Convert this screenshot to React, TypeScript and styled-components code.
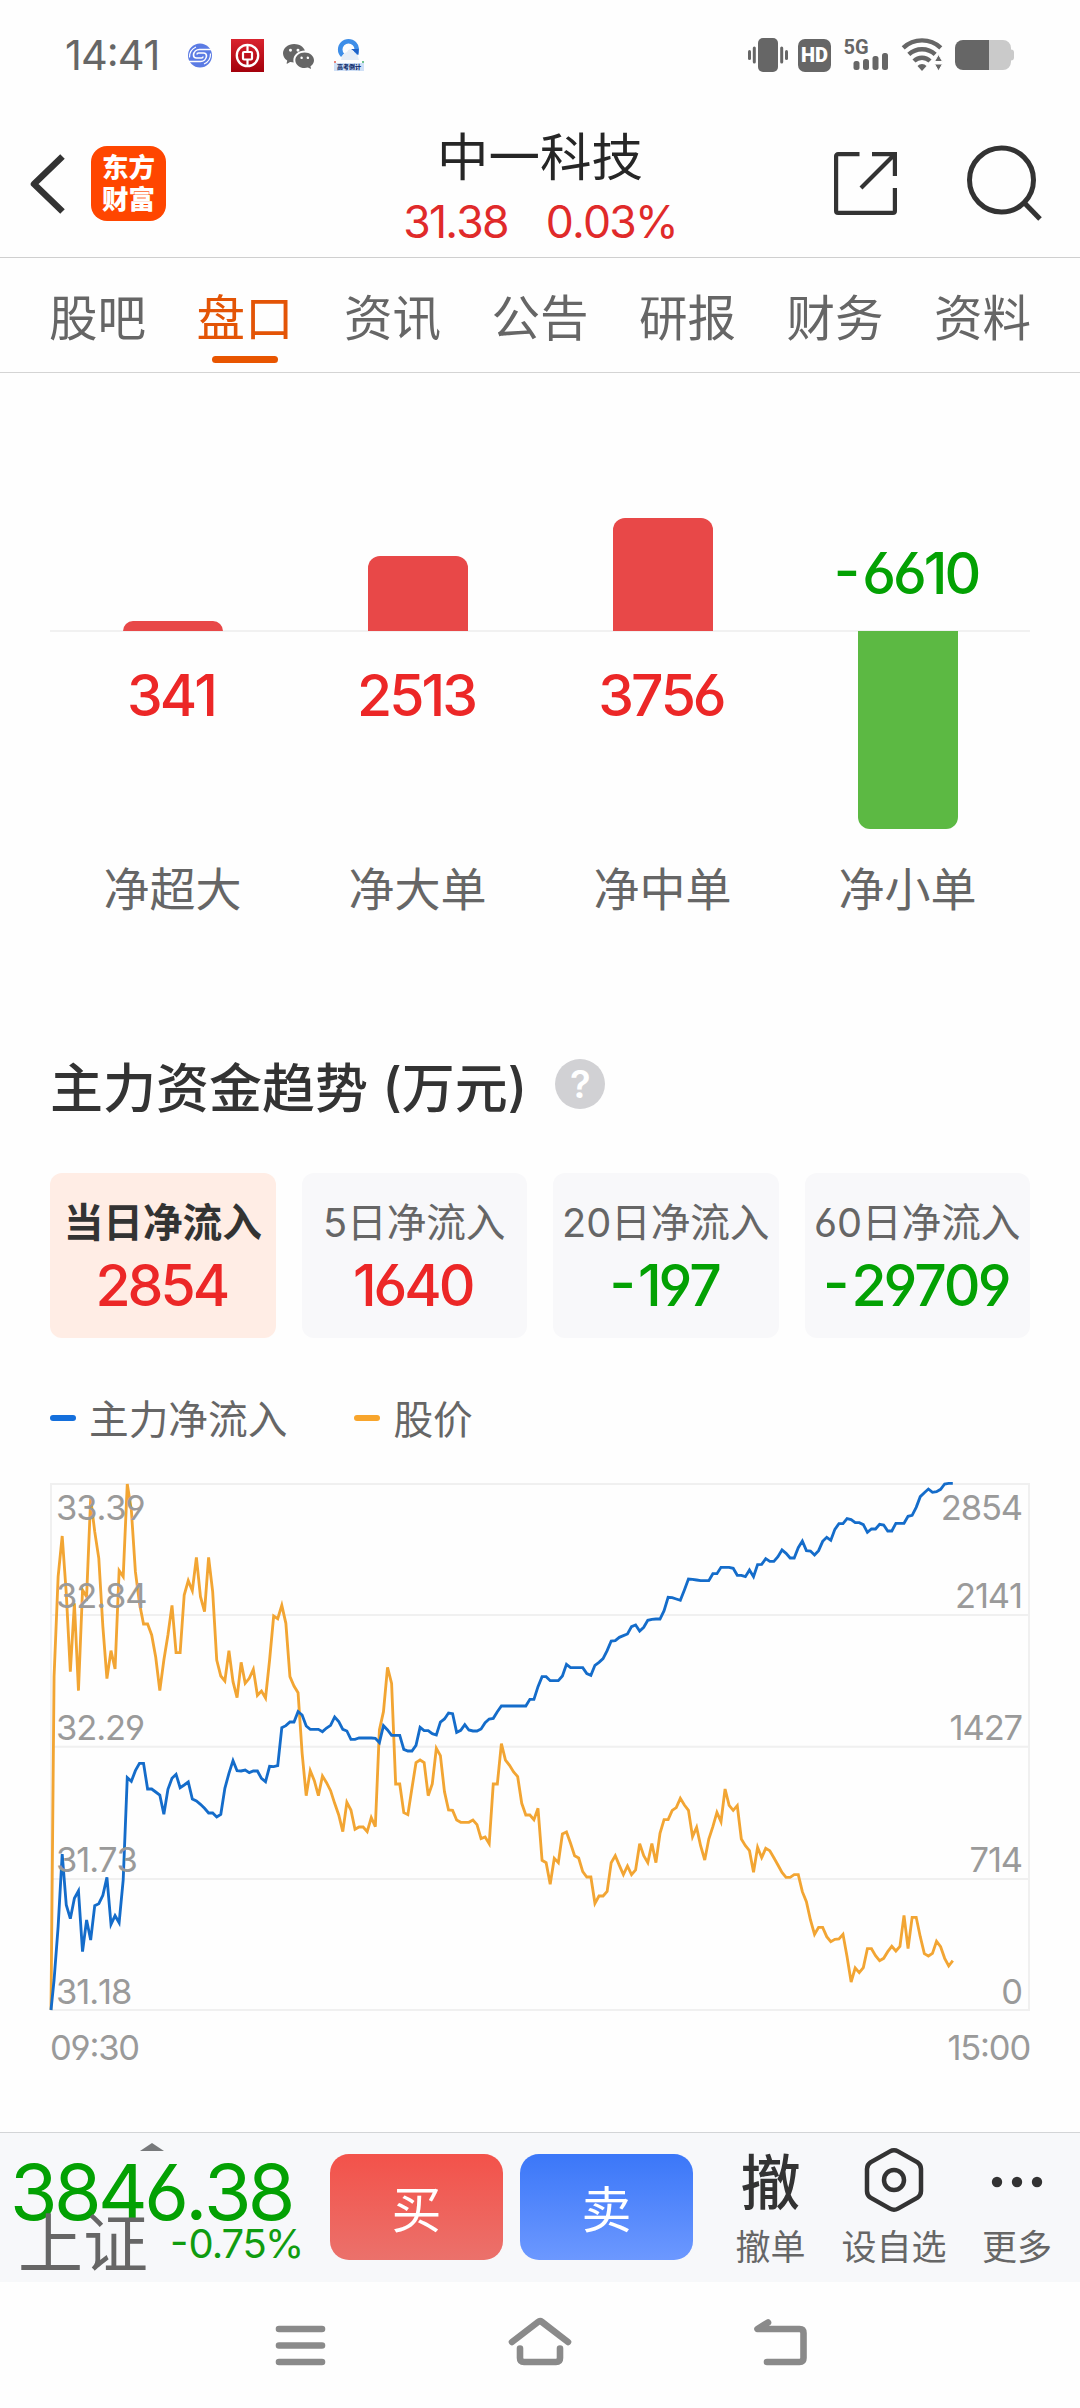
import React from "react";
import styled, { createGlobalStyle } from "styled-components";
import { BsWechat } from "react-icons/bs";

const RED = "#ec2727";
const GREEN = "#03a103";
const GREY = "#666666";
const INK = "#333333";

const GlobalStyle = createGlobalStyle`
  * { box-sizing: border-box; }
  body {
    margin: 0;
    background: #fefefe;
    font-family: Inter, "Noto Sans CJK SC", sans-serif;
    font-feature-settings: "cv03", "cv04", "case";
    font-kerning: none;
    color: ${INK};
  }
  svg { display: block; flex: none; overflow: visible; }
`;

const Screen = styled.div`
  width: 1080px;
  height: 2408px;
  display: flex;
  flex-direction: column;
  overflow: hidden;
`;

/* ---------- status bar ---------- */

const StatusBar = styled.div`
  height: 110px;
  padding: 0 66px 0 65px;
  display: flex;
  align-items: center;
  justify-content: space-between;
`;

const StatusGroup = styled.div`
  display: flex;
  align-items: center;
  gap: 13px;
`;

const Clock = styled.span`
  width: 107px;
  font-size: 41.5px;
  line-height: 50px;
  letter-spacing: -1px;
  color: ${GREY};
`;

const NotificationIcons = styled.div`
  display: flex;
  align-items: center;
  gap: 19px;
  padding-left: 3px;
`;

const HdBadge = styled.span`
  width: 33px;
  height: 33px;
  margin-left: -3px;
  border-radius: 7px;
  background: ${GREY};
  color: #fff;
  font-family: Roboto, sans-serif;
  font-size: 20px;
  font-weight: 900;
  line-height: 33px;
  text-align: center;
`;

/* ---------- header ---------- */

const Header = styled.header`
  height: 148px;
  border-bottom: 1px solid #cfcfcf;
  padding: 0 30px;
  display: grid;
  grid-template-columns: 1fr auto 1fr;
`;

const HeaderSide = styled.div<{ $end?: boolean; $gap: number }>`
  display: flex;
  align-items: center;
  justify-content: ${(p) => (p.$end ? "flex-end" : "flex-start")};
  padding-right: ${(p) => (p.$end ? 7 : 0)}px;
  gap: ${(p) => p.$gap}px;
`;

const AppLogo = styled.div`
  width: 75px;
  height: 75px;
  border-radius: 16px;
  background: #ff4600;
  color: #fff;
  font-size: 26.5px;
  font-weight: 900;
  line-height: 32px;
  padding-top: 5px;
  text-align: center;
`;

const Quote = styled.div`
  display: flex;
  flex-direction: column;
  align-items: center;
  padding-top: 17px;
`;

const StockName = styled.h1`
  margin: 0 0 10px;
  font-size: 51.5px;
  font-weight: 400;
  line-height: 60px;
  color: #262626;
`;

const StockPrice = styled.div`
  display: flex;
  gap: 38px;
  font-size: 44.5px;
  line-height: 50px;
  letter-spacing: -1.8px;
  color: #e02a2a;
`;

/* ---------- tabs ---------- */

const Tabs = styled.nav`
  height: 115px;
  border-bottom: 1px solid #d4d4d4;
  padding: 0 49px;
  display: flex;
  justify-content: space-between;
`;

const Tab = styled.div<{ $active?: boolean }>`
  display: flex;
  flex-direction: column;
  align-items: center;
  padding-top: 31px;
  font-size: 48.5px;
  line-height: 60px;
  color: ${(p) => (p.$active ? "#e35406" : GREY)};

  &::after {
    content: "";
    width: 66px;
    height: 7px;
    margin-top: 7px;
    border-radius: 4px;
    background: ${(p) => (p.$active ? "#e85500" : "transparent")};
  }
`;

/* ---------- signed amounts ---------- */

const AmountText = styled.div<{ $up: boolean }>`
  padding-right: 3px;
  font-size: 57px;
  font-weight: 500;
  line-height: 60px;
  letter-spacing: -3px;
  color: ${(p) => (p.$up ? RED : GREEN)};
`;

const Sign = styled.span<{ $space: number }>`
  letter-spacing: ${(p) => p.$space}px;
`;

const Amount = ({ value }: { value: number }) => (
  <AmountText $up={value > 0}>
    {value < 0 && <Sign $space={2}>-</Sign>}
    {Math.abs(value)}
  </AmountText>
);

/* ---------- order size bars ---------- */

const Bars = styled.section`
  margin: 0 50px;
  display: grid;
  grid-template-columns: repeat(4, 1fr);
  grid-template-rows: 258px 228px 61px;
  grid-auto-flow: column;
  justify-items: center;
  background: linear-gradient(#f1f1f1, #f1f1f1) 0 257px / 100% 2px no-repeat;
`;

const BarHalf = styled.div<{ $upper?: boolean; $text: boolean }>`
  display: flex;
  flex-direction: column;
  align-items: center;
  justify-content: ${(p) => (p.$upper ? "flex-end" : "flex-start")};
  padding: ${(p) => (!p.$text ? "0" : p.$upper ? "0 0 27px" : "35px 0 0")};
`;

const Bar = styled.div<{ $up: boolean }>`
  width: 100px;
  border-radius: ${(p) => (p.$up ? "12px 12px 0 0" : "0 0 12px 12px")};
  background: ${(p) => (p.$up ? "#e84848" : "#5cb943")};
`;

const BarLabel = styled.div`
  font-size: 46px;
  line-height: 60px;
  color: ${GREY};
`;

/* ---------- trend ---------- */

const TrendHead = styled.div`
  margin: 134px 50px 0;
  height: 71px;
  display: flex;
  gap: 28px;
`;

const TrendTitle = styled.h2`
  margin: 0;
  font-size: 53px;
  font-weight: 500;
  line-height: 70px;
`;

const Help = styled.span`
  width: 50px;
  height: 50px;
  margin-top: 5px;
  border-radius: 50%;
  background: #d1d1d4;
  color: #fff;
  font-size: 38px;
  font-weight: 600;
  line-height: 51px;
  text-align: center;
`;

const Periods = styled.div`
  margin: 48px 50px 0;
  display: grid;
  grid-template-columns: repeat(4, 1fr);
  gap: 26px;
`;

const Period = styled.div<{ $active?: boolean }>`
  height: 165px;
  border-radius: 12px;
  padding-top: 25px;
  display: flex;
  flex-direction: column;
  align-items: center;
  gap: 8px;
  white-space: nowrap;
  background: ${(p) => (p.$active ? "#ffede5" : "#f8f8fa")};
  color: ${(p) => (p.$active ? INK : GREY)};
  font-weight: ${(p) => (p.$active ? 700 : 400)};
`;

const PeriodName = styled.div`
  font-size: 39.7px;
  line-height: 50px;
  letter-spacing: -0.1px;
`;

const Legend = styled.div`
  margin: 57px 50px 0;
  display: flex;
  gap: 67px;
`;

const LegendItem = styled.div<{ $color: string }>`
  display: flex;
  align-items: center;
  gap: 13px;
  font-size: 39.7px;
  line-height: 50px;
  color: ${GREY};

  &::before {
    content: "";
    width: 26px;
    height: 6px;
    margin-top: -4px;
    border-radius: 3px;
    background: ${(p) => p.$color};
  }
`;

const Chart = styled.div`
  position: relative;
  width: 978px;
  height: 526px;
  margin: 39px 51px 0;
`;

const AxisLabel = styled.span<{ $right?: boolean }>`
  position: absolute;
  ${(p) => (p.$right ? "right: 7px" : "left: 5px")};
  font-size: 34.5px;
  line-height: 40px;
  letter-spacing: -1.1px;
  color: #9a9a9a;
`;

const Times = styled.div`
  margin: 18px 50px 0;
  display: flex;
  justify-content: space-between;
  font-size: 34.5px;
  line-height: 40px;
  letter-spacing: -1.2px;
  color: #9a9a9a;
`;

/* ---------- bottom bar ---------- */

const Footer = styled.footer`
  margin-top: auto;
  height: 150px;
  border-top: 1px solid #d3d5d7;
  background: #f7f8fa;
  display: flex;
`;

const IndexQuote = styled.div`
  width: 330px;
  padding-top: 10px;
  display: flex;
  flex-direction: column;
`;

const IndexValue = styled.div`
  padding-left: 10px;
  margin-top: 9px;
  font-size: 77px;
  line-height: 64px;
  letter-spacing: -3.6px;
  color: ${GREEN};
`;

const IndexRow = styled.div`
  margin-top: -12px;
  padding-left: 18px;
  display: flex;
  line-height: 64px;
`;

const IndexName = styled.span`
  width: 152px;
  font-size: 65px;
  color: ${GREY};
`;

const IndexChange = styled.span`
  font-size: 40px;
  letter-spacing: -1.8px;
  color: #109c10;
`;

const Trade = styled.button<{ $from: string; $to: string }>`
  width: 173px;
  height: 106px;
  margin: 21px 17px 0 0;
  padding: 5px 0 0;
  border: 0;
  border-radius: 19px;
  background: linear-gradient(${(p) => p.$from}, ${(p) => p.$to});
  color: #fff;
  font-family: inherit;
  font-size: 50px;
  line-height: 60px;
`;

const Action = styled.div<{ $width: number }>`
  width: ${(p) => p.$width}px;
  display: flex;
  flex-direction: column;
  align-items: center;
`;

const ActionIcon = styled.div<{ $drop?: number }>`
  height: 94px;
  padding-top: ${(p) => p.$drop ?? 0}px;
  display: flex;
  align-items: center;
  font-size: 60px;
  font-weight: 500;
  line-height: 60px;
`;

const ActionLabel = styled.div`
  font-size: 35px;
  line-height: 40px;
  color: ${GREY};
  white-space: nowrap;
`;

const SystemNav = styled.div`
  height: 126px;
  padding: 33px 270px 0;
  display: flex;
  justify-content: space-between;
`;

/* ---------- data ---------- */

const tabs = ["股吧", "盘口", "资讯", "公告", "研报", "财务", "资料"];

const orders = [
  { label: "净超大", value: 341, height: 10 },
  { label: "净大单", value: 2513, height: 75 },
  { label: "净中单", value: 3756, height: 113 },
  { label: "净小单", value: -6610, height: 198 },
];

const periods = [
  { name: "当日净流入", value: 2854 },
  { name: "5日净流入", value: 1640 },
  { name: "20日净流入", value: -197 },
  { name: "60日净流入", value: -29709 },
];

const axis = [
  { left: "33.39", right: "2854", top: 4 },
  { left: "32.84", right: "2141", top: 92 },
  { left: "32.29", right: "1427", top: 224 },
  { left: "31.73", right: "714", top: 356 },
  { left: "31.18", right: "0", top: 488 },
];

/* One sample a minute, as the distance below the top of the plot. */
const price = [
  1578, 578, 278, 156, 328, 563, 358, 620, 318, 338, 43, 143, 223, 428, 584, 500, 555, 260, 278, 0,
  78, 263, 358, 420, 420, 453, 520, 620, 528, 453, 364, 506, 506, 333, 290, 320, 220, 338, 383, 220,
  323, 528, 576, 591, 500, 593, 641, 535, 598, 583, 556, 634, 621, 642, 528, 396, 404, 364, 418, 578,
  606, 626, 808, 935, 860, 890, 935, 876, 896, 920, 958, 993, 1043, 955, 978, 1036, 1029, 1029, 1043, 1001,
  1028, 738, 683, 550, 598, 900, 900, 986, 992, 913, 836, 828, 836, 935, 900, 793, 815, 923, 978, 979,
  1008, 1015, 1015, 1015, 1008, 1022, 1064, 1059, 1079, 900, 900, 779, 828, 844, 864, 878, 958, 993, 993, 1007,
  973, 1129, 1136, 1201, 1123, 1136, 1050, 1044, 1078, 1115, 1122, 1163, 1179, 1179, 1258, 1236, 1236, 1222, 1136, 1115,
  1144, 1172, 1146, 1172, 1158, 1079, 1115, 1136, 1079, 1136, 1048, 1007, 1007, 979, 971, 943, 963, 979, 1058, 1030,
  1086, 1128, 1065, 1028, 985, 1013, 915, 964, 979, 965, 1065, 1085, 1100, 1165, 1090, 1121, 1093, 1100, 1121, 1143,
  1165, 1180, 1180, 1172, 1172, 1223, 1253, 1308, 1351, 1330, 1330, 1358, 1373, 1366, 1365, 1351, 1418, 1494, 1452, 1466,
  1451, 1394, 1394, 1415, 1430, 1423, 1403, 1387, 1401, 1387, 1294, 1394, 1300, 1300, 1358, 1409, 1416, 1408, 1372, 1388,
  1423, 1446, 1430,
];

const inflow = [
  1578, 1488, 1328, 1110, 1263, 1304, 1243, 1221, 1403, 1308, 1368, 1265, 1259, 1234, 1180, 1321, 1295, 1316, 1188, 881,
  892, 860, 838, 838, 915, 915, 924, 933, 991, 916, 883, 871, 911, 903, 894, 945, 951, 961, 973, 987,
  987, 999, 991, 913, 868, 830, 860, 861, 858, 866, 861, 861, 883, 893, 847, 848, 845, 731, 725, 714,
  714, 683, 693, 726, 736, 736, 736, 743, 732, 724, 699, 713, 736, 741, 766, 766, 762, 762, 762, 762,
  763, 776, 725, 738, 754, 754, 754, 796, 801, 801, 784, 730, 740, 740, 749, 753, 714, 705, 687, 689,
  745, 739, 722, 738, 741, 741, 735, 716, 705, 703, 683, 666, 666, 666, 666, 666, 666, 666, 646, 646,
  608, 578, 578, 590, 590, 590, 576, 541, 551, 551, 551, 551, 569, 574, 544, 535, 524, 500, 471, 470,
  460, 455, 450, 428, 423, 441, 430, 409, 406, 405, 405, 380, 340, 341, 345, 349, 318, 285, 286, 288,
  290, 290, 290, 269, 269, 250, 250, 250, 253, 274, 274, 278, 258, 278, 242, 241, 224, 232, 232, 218,
  198, 208, 222, 222, 191, 171, 200, 201, 213, 200, 172, 160, 169, 136, 119, 119, 104, 107, 116, 116,
  122, 145, 135, 135, 121, 123, 141, 141, 118, 118, 118, 97, 94, 70, 38, 26, 15, 25, 23, 16,
  0, -2, -2,
];

const toPoints = (samples: number[]) =>
  samples.map((y, i) => `${Math.max(0, i * 12.2 - 3).toFixed(1)},${y}`).join(" ");

/* ---------- drawings ---------- */

const SwirlIcon = () => (
  <svg width="24" height="25" viewBox="0 0 24 25" fill="none">
    <circle cx="12" cy="12.5" r="12" fill="#5b7be4" />
    <g stroke="#fefefe" strokeWidth="1.6">
      <path d="M24 6.500H11.500a6 6 0 0 0-6 5.500q0 3 3 3H13.500q1.500 0 1.500-1.500" />
      <path d="M0 18.500H12.500a6 6 0 0 0 6-5.500q0-3-3-3H10.500q-1.500 0-1.500 1.500" />
      <path d="M1.500 14.500A11 11 0 0 1 8 4M22.500 10.500A11 11 0 0 1 16 21" strokeWidth="1.200" />
    </g>
  </svg>
);

const BankIcon = () => (
  <svg width="33" height="33" viewBox="0 0 33 33" fill="none" stroke="#fff">
    <defs>
      <linearGradient id="bank" x1="0" y1="0" x2="0" y2="1">
        <stop offset="0" stopColor="#d9232e" />
        <stop offset="1" stopColor="#a3000b" />
      </linearGradient>
    </defs>
    <rect width="33" height="33" fill="url(#bank)" stroke="none" />
    <circle cx="16.5" cy="16.5" r="10.7" strokeWidth="2.3" />
    <rect x="12" y="13" width="9" height="7.5" rx="1" strokeWidth="2.2" />
    <path d="M16.5 6v7M16.5 20.5v7" strokeWidth="2.2" />
  </svg>
);

const BrowserIcon = () => (
  <svg width="32" height="34" viewBox="0 0 32 34">
    <rect x="1" y="25" width="30" height="8" fill="#cfe0f7" />
    <circle cx="15.500" cy="11.500" r="8.3" fill="none" stroke="#3e8ee8" strokeWidth="4.600" strokeDasharray="38 15" transform="rotate(135 15.500 11.500)" />
    <path d="M18 11l7.500 0v6z" fill="#1f62c8" />
    <path d="M8 22q1-7 6-8 2-5 6-1 5 3 6 9z" fill="#e6edf6" />
    <text x="16" y="31" textAnchor="middle" fontSize="6" fontWeight="900" fill="#14306e" fontFamily="Noto Sans CJK SC, sans-serif">高考倒计</text>
    <circle cx="2" cy="24" r="1" fill="#e25b4d" />
    <circle cx="30" cy="24" r="1" fill="#42b06b" />
  </svg>
);

const VibrateIcon = () => (
  <svg width="40" height="34" viewBox="0 0 40 34" fill={GREY}>
    <rect x="10" y="0" width="20" height="34" rx="5" />
    <rect x="4.8" y="8.5" width="3" height="17" rx="1.5" />
    <rect x="0" y="12" width="3" height="10" rx="1.5" />
    <rect x="32.2" y="8.5" width="3" height="17" rx="1.5" />
    <rect x="37" y="12" width="3" height="10" rx="1.5" />
  </svg>
);

const SignalIcon = () => (
  <svg width="45" height="34" viewBox="0 0 45 34" fill={GREY}>
    <text x="-0.5" y="16" fontSize="20" fontWeight="700" fontFamily="Roboto, sans-serif">5G</text>
    <rect x="9.5" y="23" width="6" height="9" rx="2.5" />
    <rect x="19" y="21" width="6" height="11" rx="2.5" />
    <rect x="28.5" y="18" width="6" height="14" rx="2.5" />
    <rect x="38" y="15" width="6" height="17" rx="2.5" />
  </svg>
);

const WifiIcon = () => (
  <svg width="40" height="32" viewBox="0 0 40 32" fill="none" stroke={GREY} strokeWidth="4.400">
    <path d="M1.2 8.8a27.5 27.5 0 0 1 37.6 0" />
    <path d="M6.8 15.4a19.5 19.5 0 0 1 26.4 0" />
    <path d="M12 22a11.5 11.5 0 0 1 16 0" />
    <path d="M15.5 27a6 6 0 0 1 9 0L20 32z" fill={GREY} stroke="none" />
    <path d="M36.500 15.500l4 7h-8zM36.500 32l4-7h-8z" fill={GREY} stroke="#fefefe" strokeWidth="1" />
  </svg>
);

const BatteryIcon = () => (
  <svg width="59" height="30" viewBox="0 0 59 30">
    <path d="M34 0h14a8 8 0 0 1 8 8v1.500a3 3 0 0 1 3 3v5a3 3 0 0 1-3 3V22a8 8 0 0 1-8 8H34z" fill="#cacaca" />
    <path d="M8 0h26v30H8a8 8 0 0 1-8-8V8a8 8 0 0 1 8-8z" fill={GREY} />
  </svg>
);

const BackIcon = () => (
  <svg width="35" height="60" viewBox="0 0 35 60" fill="none" stroke={INK} strokeWidth="6.5">
    <path d="M32.500 2.500L4 30l28.500 27.500" strokeLinejoin="round" />
  </svg>
);

const ShareIcon = () => (
  <svg width="63" height="63" viewBox="0 0 63 63" fill="none" stroke={INK} strokeWidth="4.2">
    <path d="M25.500 2.100H4.100a2 2 0 0 0-2 2v54.800a2 2 0 0 0 2 2h54.800a2 2 0 0 0 2-2V36" />
    <path d="M38 2.100h22.900v22M60 3L27 36" />
  </svg>
);

const SearchIcon = () => (
  <svg width="76" height="77" viewBox="0 0 76 77" fill="none" stroke={INK} strokeWidth="5">
    <circle cx="34.500" cy="35" r="32" />
    <path d="M57 57.500l16 16.500" />
  </svg>
);

const HexIcon = () => (
  <svg width="60" height="64" viewBox="0 0 60 64" fill="none" stroke={INK} strokeWidth="4.500">
    <path d="M26 3.400a8 8 0 0 1 8 0l19.500 11a8 8 0 0 1 3.500 6.500v22.200a8 8 0 0 1-3.500 6.500L34 60.600a8 8 0 0 1-8 0l-19.500-11A8 8 0 0 1 3 43.100V20.900a8 8 0 0 1 3.500-6.500z" />
    <circle cx="30" cy="32" r="10" />
  </svg>
);

const MoreIcon = () => (
  <svg width="52" height="12" viewBox="0 0 52 12" fill={INK}>
    <circle cx="6" cy="6" r="5.200" />
    <circle cx="26" cy="6" r="5.200" />
    <circle cx="46" cy="6" r="5.200" />
  </svg>
);

const NavIcon = ({ d, width }: { d: string; width: number }) => (
  <svg width={width} height="52" viewBox={`0 0 ${width} 52`} fill="none" stroke="#8a8a8a" strokeWidth="6.600" strokeLinecap="round" strokeLinejoin="round">
    <path d={d} />
  </svg>
);

const TrendChart = () => (
  <Chart>
    <svg width="978" height="526" viewBox="0 0 2934 1578" overflow="visible" fill="none">
      <g stroke="#f0f0f0" strokeWidth="6">
        <rect width="2934" height="1578" />
        <path d="M0 393H2934M0 788H2934M0 1185H2934" />
      </g>
      <polyline points={toPoints(price)} stroke="#f2a533" strokeWidth="8.500" />
      <polyline points={toPoints(inflow)} stroke="#146cca" strokeWidth="8.500" />
    </svg>
    {axis.map((a) => (
      <React.Fragment key={a.left}>
        <AxisLabel style={{ top: a.top }}>{a.left}</AxisLabel>
        <AxisLabel $right style={{ top: a.top }}>{a.right}</AxisLabel>
      </React.Fragment>
    ))}
  </Chart>
);

export default function App() {
  return (
    <Screen>
      <GlobalStyle />
      <StatusBar>
        <StatusGroup>
          <Clock>14:41</Clock>
          <NotificationIcons>
            <SwirlIcon />
            <BankIcon />
            <BsWechat size={31} color={GREY} />
            <BrowserIcon />
          </NotificationIcons>
        </StatusGroup>
        <StatusGroup>
          <VibrateIcon />
          <HdBadge>HD</HdBadge>
          <SignalIcon />
          <WifiIcon />
          <BatteryIcon />
        </StatusGroup>
      </StatusBar>

      <Header>
        <HeaderSide $gap={26}>
          <BackIcon />
          <AppLogo>东方<br />财富</AppLogo>
        </HeaderSide>
        <Quote>
          <StockName>中一科技</StockName>
          <StockPrice>
            <span>31.38</span>
            <span>0.03%</span>
          </StockPrice>
        </Quote>
        <HeaderSide $end $gap={70}>
          <ShareIcon />
          <SearchIcon />
        </HeaderSide>
      </Header>

      <Tabs>
        {tabs.map((t) => (
          <Tab key={t} $active={t === "盘口"}>{t}</Tab>
        ))}
      </Tabs>

      <Bars>
        {orders.map(({ label, value, height }) => {
          const up = value > 0;
          const bar = <Bar $up={up} style={{ height }} />;
          const amount = <Amount value={value} />;
          return (
            <React.Fragment key={label}>
              <BarHalf $upper $text={!up}>{up ? bar : amount}</BarHalf>
              <BarHalf $text={up}>{up ? amount : bar}</BarHalf>
              <BarLabel>{label}</BarLabel>
            </React.Fragment>
          );
        })}
      </Bars>

      <TrendHead>
        <TrendTitle>主力资金趋势 (万元)</TrendTitle>
        <Help>?</Help>
      </TrendHead>
      <Periods>
        {periods.map((p, i) => (
          <Period key={p.name} $active={i === 0}>
            <PeriodName>{p.name}</PeriodName>
            <Amount value={p.value} />
          </Period>
        ))}
      </Periods>
      <Legend>
        <LegendItem $color="#146fdc">主力净流入</LegendItem>
        <LegendItem $color="#f8a52c">股价</LegendItem>
      </Legend>
      <TrendChart />
      <Times>
        <span>09:30</span>
        <span>15:00</span>
      </Times>

      <Footer>
        <IndexQuote>
          <svg width="330" height="8" viewBox="0 0 330 8">
            <path d="M140 8l12-8 12 8z" fill="#77797b" />
          </svg>
          <IndexValue>3846.38</IndexValue>
          <IndexRow>
            <IndexName>上证</IndexName>
            <IndexChange><Sign $space={0}>-</Sign>0.75%</IndexChange>
          </IndexRow>
        </IndexQuote>
        <Trade $from="#f3524a" $to="#eb716b">买</Trade>
        <Trade $from="#3b77f8" $to="#6c98ff">卖</Trade>
        <Action $width={121}>
          <ActionIcon $drop={6}>撤</ActionIcon>
          <ActionLabel>撤单</ActionLabel>
        </Action>
        <Action $width={126}>
          <ActionIcon><HexIcon /></ActionIcon>
          <ActionLabel>设自选</ActionLabel>
        </Action>
        <Action $width={120}>
          <ActionIcon $drop={4}><MoreIcon /></ActionIcon>
          <ActionLabel>更多</ActionLabel>
        </Action>
      </Footer>

      <SystemNav>
        <NavIcon width={60} d="M9 14H52M9 30.500H52M9 47H52" />
        <NavIcon width={66} d="M5 27L31 7q2-1.500 4 0L61 27M13 33.500V43q0 4 4 4H49q4 0 4-4V33.500" />
        <NavIcon width={60} d="M18 7.500L7.500 14H49.500q4 0 4 4V43q0 4-4 4H17" />
      </SystemNav>
    </Screen>
  );
}
